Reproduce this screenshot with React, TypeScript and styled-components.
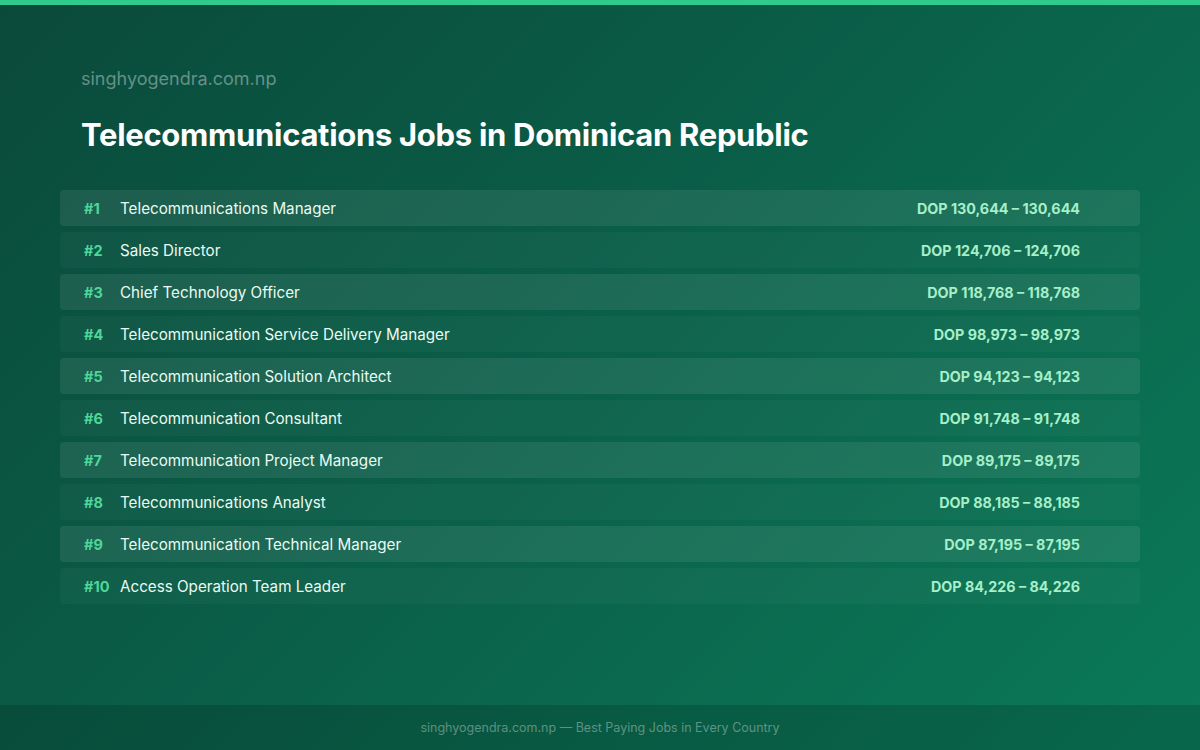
import React from "react";
import styled, { createGlobalStyle } from "styled-components";

const Global = createGlobalStyle`
  html, body { margin: 0; padding: 0; }
  body { font-family: Inter, "Noto Sans", sans-serif; }
`;

const Page = styled.div`
  width: 1200px; height: 750px; display: flex; flex-direction: column;
  background: linear-gradient(135deg, #0a4a3b 0%, #0a5e48 45%, #0a7a58 100%);
  border-top: 5px solid #2fcb8c; box-sizing: border-box;
`;
const Main = styled.div`flex: 1; padding: 63px 60px 0;`;
const Domain = styled.div`font-size: 18px; color: rgba(255,255,255,0.38); padding-left: 21px; line-height: 22px;`;
const Title = styled.h1`margin: 25px 0 35px 21px; font-size: 31px; font-weight: 700; color: #fff; letter-spacing: -0.3px; line-height: 40px;`;
const List = styled.div`display: flex; flex-direction: column; gap: 6px;`;
const Row = styled.div<{ $alt: boolean }>`
  height: 36px; display: flex; align-items: center; padding: 0 60px 0 24px;
  border-radius: 4px; background: ${p => p.$alt ? "rgba(255,255,255,0.08)" : "rgba(255,255,255,0.03)"};
`;
const Rank = styled.span`width: 36px; font-size: 14.5px; font-weight: 700; color: #4fd69a;`;
const Name = styled.span`flex: 1; font-size: 15.2px; color: #eafaf2;`;
const Salary = styled.span`font-size: 14.3px; font-weight: 700; color: #a6efc9;`;
const Footer = styled.div`height: 45px; background: rgba(0,0,0,0.15); display: flex; align-items: center; justify-content: center; font-size: 12.5px; color: rgba(255,255,255,0.35);`;

const jobs: [string, string][] = [
  ["Telecommunications Manager", "DOP 130,644 – 130,644"],
  ["Sales Director", "DOP 124,706 – 124,706"],
  ["Chief Technology Officer", "DOP 118,768 – 118,768"],
  ["Telecommunication Service Delivery Manager", "DOP 98,973 – 98,973"],
  ["Telecommunication Solution Architect", "DOP 94,123 – 94,123"],
  ["Telecommunication Consultant", "DOP 91,748 – 91,748"],
  ["Telecommunication Project Manager", "DOP 89,175 – 89,175"],
  ["Telecommunications Analyst", "DOP 88,185 – 88,185"],
  ["Telecommunication Technical Manager", "DOP 87,195 – 87,195"],
  ["Access Operation Team Leader", "DOP 84,226 – 84,226"],
];

export default function App() {
  return (
    <Page>
      <Global />
      <Main>
        <Domain>singhyogendra.com.np</Domain>
        <Title>Telecommunications Jobs in Dominican Republic</Title>
        <List>
          {jobs.map(([n, s], i) => (
            <Row key={i} $alt={i % 2 === 0}>
              <Rank>#{i + 1}</Rank>
              <Name>{n}</Name>
              <Salary>{s}</Salary>
            </Row>
          ))}
        </List>
      </Main>
      <Footer>singhyogendra.com.np — Best Paying Jobs in Every Country</Footer>
    </Page>
  );
}
